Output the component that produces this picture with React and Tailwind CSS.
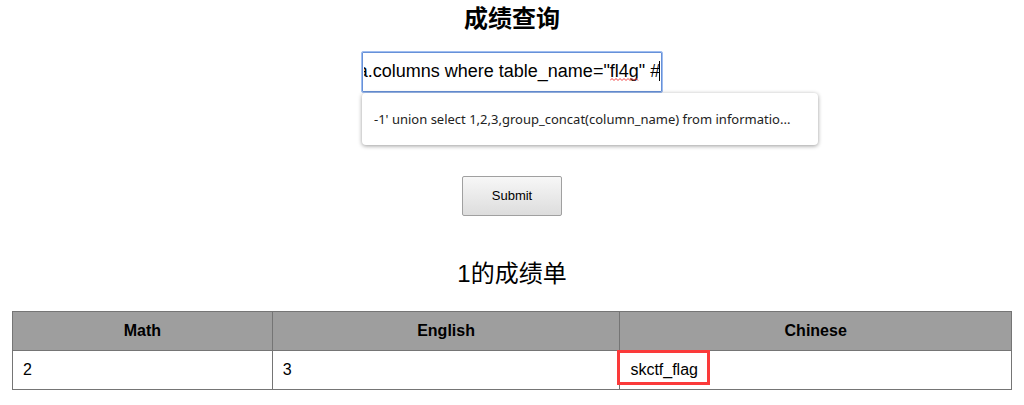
import { useLayoutEffect, useRef } from "react";

const QUERY =
  "-1' union select 1,2,3,group_concat(column_name) from information_schema.columns where table_name=\"fl4g\" #";

function SearchField() {
  const inputRef = useRef(null);

  // Keep the end of the long query in view.
  useLayoutEffect(() => {
    inputRef.current.scrollLeft = inputRef.current.scrollWidth;
  }, []);

  return (
    <div className="relative w-[302px]">
      <input
        ref={inputRef}
        type="text"
        aria-label="成绩查询"
        defaultValue={QUERY}
        spellCheck={false}
        className="block h-[42px] w-full rounded-xs border border-[#9fbdf0] bg-white px-0.5 pb-0.5 text-lg text-black caret-transparent inset-ring inset-ring-[#6791d8] outline-none"
      />
      <span className="pointer-events-none absolute top-2.5 right-[3px] h-5 w-px bg-black" />
      <svg
        className="pointer-events-none absolute top-[27px] right-6 h-[3px] w-[29px]"
        viewBox="0 0 29 3"
        fill="none"
        stroke="#f03c3c"
        aria-hidden="true"
      >
        <path d="M0 2.5L2 .5L4 2.5L6 .5L8 2.5L10 .5L12 2.5L14 .5L16 2.5L18 .5L20 2.5L22 .5L24 2.5L26 .5L28 2.5" />
      </svg>
      <button
        type="button"
        className="absolute top-[42px] left-px h-[52px] w-[456px] truncate rounded-sm bg-white px-3 pt-0.5 text-left font-['Noto_Sans',sans-serif] text-[13px] text-[#222222] shadow-[0_1px_4px_rgba(0,0,0,0.4)]"
      >
        -1' union select 1,2,3,group_concat(column_name) from informatio...
      </button>
    </div>
  );
}

export default function App() {
  return (
    <main className="flex flex-col items-center bg-white px-3 font-['Liberation_Sans','Noto_Sans_CJK_SC',sans-serif] text-black">
      <h1 className="pt-px text-2xl leading-9 font-bold">成绩查询</h1>
      <form
        className="mt-3.5 flex w-full flex-col items-center"
        onSubmit={(event) => event.preventDefault()}
      >
        <SearchField />
        <button
          type="submit"
          className="mt-[83px] h-10 w-[100px] rounded-xs border border-[#a0a0a0] bg-linear-to-b from-[#f7f7f7] to-[#dddddd] text-[13px]"
        >
          Submit
        </button>
      </form>
      <table className="mt-10 w-full table-fixed border-collapse text-base">
        <caption className="pb-[19px] text-2xl leading-9">1的成绩单</caption>
        <colgroup>
          <col className="w-[26%]" />
          <col className="w-[34.8%]" />
          <col />
        </colgroup>
        <thead>
          <tr className="h-[39px] bg-[#9e9e9e]">
            <th className="border border-[#757575]">Math</th>
            <th className="border border-[#757575]">English</th>
            <th className="border border-[#757575]">Chinese</th>
          </tr>
        </thead>
        <tbody>
          <tr className="h-[39px]">
            <td className="border border-[#757575] px-2.5">2</td>
            <td className="border border-[#757575] px-2.5">3</td>
            <td className="border border-[#757575] px-2.5">
              <span className="relative">
                skctf_flag
                <span className="pointer-events-none absolute -top-[11px] right-[-12px] left-[-13px] h-[35px] border-3 border-[#fb3a3a]" />
              </span>
            </td>
          </tr>
        </tbody>
      </table>
    </main>
  );
}
